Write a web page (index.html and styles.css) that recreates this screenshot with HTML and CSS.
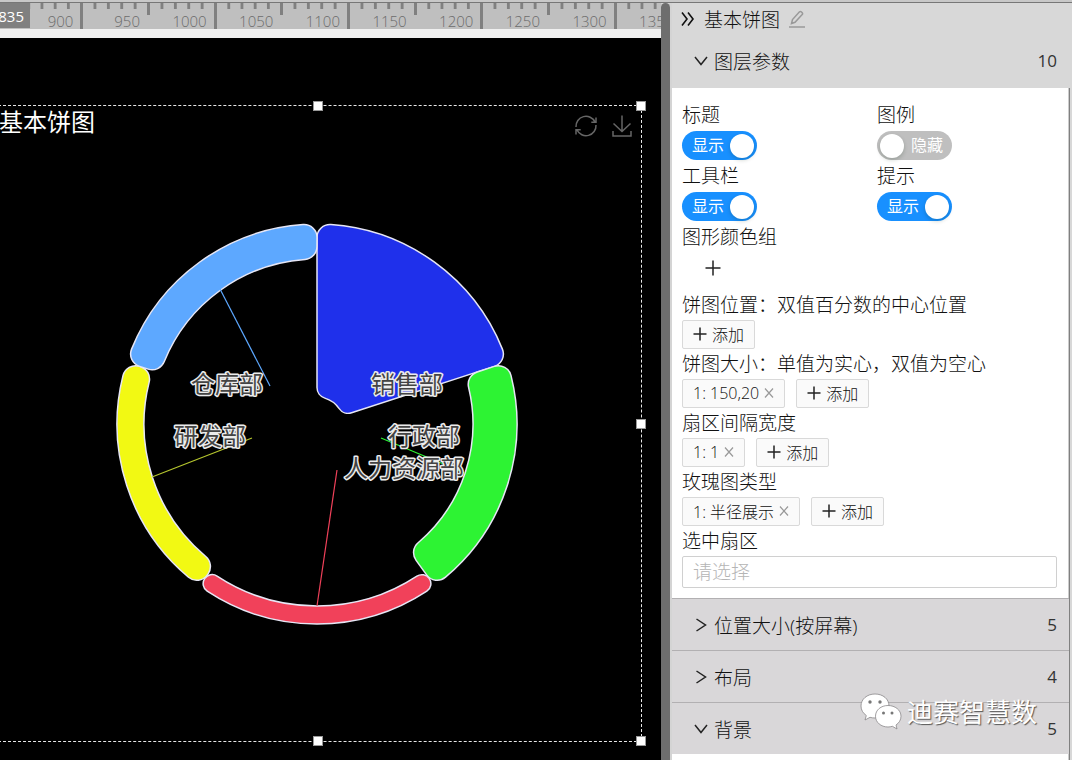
FILE: index.html
```html
<!DOCTYPE html>
<html lang="zh-CN">
<head>
<meta charset="utf-8">
<meta name="viewport" content="width=device-width, initial-scale=1">
<title>基本饼图</title>
<link rel="stylesheet" href="styles.css">
</head>
<body>
<div class="top-strip"></div>
<div class="workspace">
  <main class="editor">
    <div class="ruler">
      <div class="ruler-track">
        <span class="cell mid"></span><span class="cell major">900</span>
        <span class="cell mid">950</span><span class="cell major">1000</span>
        <span class="cell mid">1050</span><span class="cell major">1100</span>
        <span class="cell mid">1150</span><span class="cell major">1200</span>
        <span class="cell mid">1250</span><span class="cell major">1300</span>
        <span class="cell mid">1350</span><span class="cell major"></span>
      </div>
      <span class="ruler-badge">835</span>
    </div>
    <div class="canvas">
      <section class="frame">
        <header class="chart-head">
          <h1 class="chart-title">基本饼图</h1>
          <div class="chart-tools">
            <button class="icon-btn" type="button" aria-label="刷新">
              <svg width="24" height="24" viewBox="0 0 24 24" fill="none" stroke="currentColor" stroke-width="1.5"><path d="M2 13A10 10 0 0 1 21 8M22 11A10 10 0 0 1 3 16M22 3.500V8.300H17.300M2 20.500V15.700H6.700"/></svg>
            </button>
            <button class="icon-btn" type="button" aria-label="下载">
              <svg width="24" height="24" viewBox="0 0 24 24" fill="none" stroke="currentColor" stroke-width="1.500"><path d="M12 1.500V17M3.500 9.500L12 17.500L20.500 9.500M3 17V22H21V17"/></svg>
            </button>
          </div>
        </header>
        <svg class="chart" viewBox="-323 -318 647 635" role="img" aria-label="基本饼图">
          <g class="slices">
            <path fill="#1f30eb" d="M0-36.400V-186.500A13 13 0 0 1 13.900-199.500A200 200 0 0 1 185.400-74.900A13 13 0 0 1 177.400-57.600L34.600-11.200A11 11 0 0 1 22.200-15.400A27 27 0 0 0 7.800-25.900A11 11 0 0 1 0-36.400Z"/>
            <path fill="#2df333" transform="rotate(72)" d="M0-168.500V-186.500A13 13 0 0 1 13.900-199.500A200 200 0 0 1 185.400-74.900A13 13 0 0 1 177.400-57.600L160.300-52.100A13 13 0 0 1 144.200-59.500A156 156 0 0 0 12-155.500A13 13 0 0 1 0-168.500Z"/>
            <path fill="#f1415a" transform="rotate(144)" d="M0-190.800A9 9 0 0 1 9.400-199.800A200 200 0 0 1 187.100-70.700A9 9 0 0 1 181.500-59A9 9 0 0 1 170.200-64.300A182 182 0 0 0 8.600-181.800A9 9 0 0 1 0-190.800Z"/>
            <path fill="#f2f913" transform="rotate(216)" d="M0-185.500V-186.500A13 13 0 0 1 13.900-199.500A200 200 0 0 1 185.400-74.900A13 13 0 0 1 177.400-57.600L176.400-57.300A13 13 0 0 1 160.400-64.800A173 173 0 0 0 12.100-172.600A13 13 0 0 1 0-185.500Z"/>
            <path fill="#5da8ff" transform="rotate(288)" d="M0-177.500V-186.500A13 13 0 0 1 13.900-199.500A200 200 0 0 1 185.400-74.900A13 13 0 0 1 177.400-57.600L168.800-54.900A13 13 0 0 1 152.800-62.300A165 165 0 0 0 12-164.600A13 13 0 0 1 0-177.500Z"/>
          </g>
          <g class="leaders">
            <path stroke="#5da8ff" d="M-97-135L-47-38"/>
            <path stroke="#b5c62e" d="M-165 53L-65 14"/>
            <path stroke="#2df333" d="M64 14L148 49"/>
            <path stroke="#f1415a" d="M20 46L0 182"/>
          </g>
          <g class="slice-labels">
            <text x="54" y="-31">销售部</text>
            <text x="71" y="21">行政部</text>
            <text x="27" y="53">人力资源部</text>
            <text x="-143" y="21">研发部</text>
            <text x="-126" y="-31">仓库部</text>
          </g>
        </svg>
        <i class="handle n"></i><i class="handle ne"></i><i class="handle e"></i><i class="handle se"></i><i class="handle s"></i>
      </section>
    </div>
  </main>
  <div class="divider"><div class="divider-thumb"></div></div>
  <aside class="panel">
    <header class="panel-head">
      <button class="icon-btn" type="button" aria-label="收起">
        <svg width="15" height="16" viewBox="0 0 15 16" fill="none" stroke="currentColor" stroke-width="1.600"><path d="M1 1.500L6 8L1 14.500M7 1.500L12 8L7 14.500"/></svg>
      </button>
      <h2 class="panel-title">基本饼图</h2>
      <button class="icon-btn edit" type="button" aria-label="编辑">
        <svg width="18" height="18" viewBox="0 0 18 18" fill="none" stroke="currentColor" stroke-width="1.500"><path d="M1 17H17M3.500 13.500L4.500 9.500L11.500 1.800Q12.500 1 13.500 2L14.200 2.700Q15 3.700 14.200 4.600L7 12.300Z"/></svg>
      </button>
    </header>
    <button class="section-head first" type="button" aria-expanded="true">
      <svg class="chevron" width="14" height="14" viewBox="0 0 14 14"><path d="M1 3L7 10.500L13 3"/></svg>
      <span>图层参数</span><span class="count">10</span>
    </button>
    <div class="panel-body">
      <form class="form">
        <div class="switch-grid">
          <div class="field">
            <label class="label tall" for="sw-title">标题</label>
            <div class="switch"><input id="sw-title" type="checkbox" role="switch" checked><span>显示</span></div>
          </div>
          <div class="field">
            <label class="label tall" for="sw-legend">图例</label>
            <div class="switch off"><input id="sw-legend" type="checkbox" role="switch"><span>隐藏</span></div>
          </div>
          <div class="field">
            <label class="label tall" for="sw-tools">工具栏</label>
            <div class="switch"><input id="sw-tools" type="checkbox" role="switch" checked><span>显示</span></div>
          </div>
          <div class="field">
            <label class="label tall" for="sw-tip">提示</label>
            <div class="switch"><input id="sw-tip" type="checkbox" role="switch" checked><span>显示</span></div>
          </div>
        </div>
        <div class="label tall">图形颜色组</div>
        <button class="color-add" type="button" aria-label="添加颜色">
          <svg class="plus" width="16" height="16" viewBox="0 0 16 16"><path d="M8 0.500V15.500M0.500 8H15.500"/></svg>
        </button>
        <div class="label">饼图位置：双值百分数的中心位置</div>
        <div class="tags">
          <button class="tag add" type="button"><svg class="plus" width="14" height="14" viewBox="0 0 14 14"><path d="M7 0.500V13.500M0.500 7H13.500"/></svg>添加</button>
        </div>
        <div class="label">饼图大小：单值为实心，双值为空心</div>
        <div class="tags">
          <span class="tag">1: 150,20<button class="close" type="button" aria-label="删除"><svg width="10" height="10" viewBox="0 0 10 10"><path d="M1 0.500L9 9.500M9 0.500L1 9.500"/></svg></button></span>
          <button class="tag add" type="button"><svg class="plus" width="14" height="14" viewBox="0 0 14 14"><path d="M7 0.500V13.500M0.500 7H13.500"/></svg>添加</button>
        </div>
        <div class="label">扇区间隔宽度</div>
        <div class="tags">
          <span class="tag">1: 1<button class="close" type="button" aria-label="删除"><svg width="10" height="10" viewBox="0 0 10 10"><path d="M1 0.500L9 9.500M9 0.500L1 9.500"/></svg></button></span>
          <button class="tag add" type="button"><svg class="plus" width="14" height="14" viewBox="0 0 14 14"><path d="M7 0.500V13.500M0.500 7H13.500"/></svg>添加</button>
        </div>
        <div class="label">玫瑰图类型</div>
        <div class="tags">
          <span class="tag">1: 半径展示<button class="close" type="button" aria-label="删除"><svg width="10" height="10" viewBox="0 0 10 10"><path d="M1 0.500L9 9.500M9 0.500L1 9.500"/></svg></button></span>
          <button class="tag add" type="button"><svg class="plus" width="14" height="14" viewBox="0 0 14 14"><path d="M7 0.500V13.500M0.500 7H13.500"/></svg>添加</button>
        </div>
        <label class="label" for="picked">选中扇区</label>
        <input class="text-input" id="picked" type="text" placeholder="请选择">
      </form>
      <button class="section-head" type="button" aria-expanded="false">
        <svg class="chevron" width="14" height="14" viewBox="0 0 14 14"><path d="M2.500 1L11.500 7L2.500 13"/></svg>
        <span>位置大小(按屏幕)</span><span class="count">5</span>
      </button>
      <button class="section-head" type="button" aria-expanded="false">
        <svg class="chevron" width="14" height="14" viewBox="0 0 14 14"><path d="M2.500 1L11.500 7L2.500 13"/></svg>
        <span>布局</span><span class="count">4</span>
      </button>
      <button class="section-head" type="button" aria-expanded="true">
        <svg class="chevron" width="14" height="14" viewBox="0 0 14 14"><path d="M1 3L7 10.500L13 3"/></svg>
        <span>背景</span><span class="count">5</span>
      </button>
    </div>
    <div class="watermark">
      <svg width="42" height="38" viewBox="0 0 42 38">
        <path fill="#fff" stroke="#8a888a" stroke-width=".8" d="M15 1C7 1 1 6.200 1 13C1 17 3 20.200 6.300 22.500L5 27L10 24.300C11.600 24.800 13.300 25 15 25C23 25 29 20 29 13S23 1 15 1Z"/>
        <path fill="#fff" stroke="#8a888a" stroke-width=".8" d="M28 12.500C21 12.500 15.500 17 15.500 23.200S21 34 28 34C29.500 34 31 33.700 32.400 33.300L37 36L36 32C39 30 41 27 41 23.200C41 17 35 12.500 28 12.500Z"/>
        <g fill="#777"><circle cx="10" cy="9" r="1.700"/><circle cx="20" cy="9" r="1.700"/><circle cx="23.500" cy="20" r="1.500"/><circle cx="32" cy="20" r="1.500"/></g>
      </svg>
      <span>迪赛智慧数</span>
    </div>
  </aside>
</div>
</body>
</html>
```
FILE: styles.css
```css
* { box-sizing: border-box; }

body {
  margin: 0;
  height: 100vh;
  display: flex;
  flex-direction: column;
  overflow: hidden;
  font-family: "Open Sans", "Noto Sans CJK SC", sans-serif;
  font-weight: 300;
  font-size: 19px;
  color: #111;
  background: #d8d8d8;
}

button, input {
  font: inherit;
  color: inherit;
  margin: 0;
}

button {
  border: 0;
  padding: 0;
  background: none;
  cursor: pointer;
}

h1, h2 { margin: 0; font-weight: inherit; }

.top-strip {
  flex: none;
  height: 3px;
  background: #c8c8c8;
  border-bottom: 1px solid #777;
}

.workspace {
  flex: 1;
  min-height: 0;
  display: flex;
}

/* editor */
.editor {
  flex: 1;
  min-width: 0;
  display: flex;
  flex-direction: column;
  overflow: hidden;
}

.ruler {
  position: relative;
  flex: none;
  height: 35px;
  overflow: hidden;
  background: #bfbfbf;
  border-bottom: 9px solid #f0f0f0;
}

.ruler-track {
  display: grid;
  grid-template-columns: repeat(12, 1fr);
  width: 800px;
  height: 100%;
  margin-left: -50px;
}

.cell {
  padding: 6px 10px 0 0;
  text-align: right;
  font-size: 15px;
  line-height: 24px;
  color: #6c6c6c;
  background:
    linear-gradient(#808080, #808080) right top / 3px 12px no-repeat,
    linear-gradient(to left, #808080 3px, transparent 3px) left top / 20% 6px repeat-x;
}

.cell.major {
  background:
    linear-gradient(#808080, #808080) right top / 3px 100% no-repeat,
    linear-gradient(to left, #808080 3px, transparent 3px) left top / 20% 6px repeat-x;
}

.ruler-badge {
  position: absolute;
  left: 0;
  top: 0;
  width: 30px;
  height: 25px;
  padding-right: 6px;
  display: flex;
  justify-content: flex-end;
  font-size: 15px;
  font-weight: 400;
  line-height: 26px;
  color: #fff;
  background: #808080;
}

.canvas {
  position: relative;
  flex: 1;
  min-height: 0;
  overflow: hidden;
  background: #000;
}

.frame {
  position: absolute;
  top: 67px;
  right: 19px;
  bottom: 18px;
  width: 649px;
  display: grid;
  border: 1px dashed #e8e8e8;
}

.chart-head {
  grid-area: 1 / 1;
  align-self: start;
  display: flex;
  justify-content: space-between;
  padding: 0 7px 0 5px;
}

.chart-title {
  font-size: 24px;
  font-weight: 400;
  line-height: 32px;
  color: #fff;
}

.chart-tools {
  display: flex;
  gap: 12px;
  padding-top: 8px;
  color: #666;
}

.icon-btn, .close { display: flex; }

.chart {
  grid-area: 1 / 1;
  width: 100%;
  height: 100%;
  pointer-events: none;
}

.slices { stroke: #e6e6f5; stroke-width: 1.5; }
.leaders { fill: none; stroke-width: 1.2; }

.slice-labels {
  font-size: 24px;
  font-weight: 400;
  fill: #444;
  stroke: #ececec;
  stroke-width: 3;
  stroke-linejoin: round;
  paint-order: stroke;
}

.handle {
  position: absolute;
  width: 10px;
  height: 10px;
  background: #fff;
  border: 1px solid #999;
  transform: translate(-50%, -50%);
}

.n { left: 50%; top: 0; }
.ne { left: 100%; top: 0; }
.e { left: 100%; top: 50%; }
.se { left: 100%; top: 100%; }
.s { left: 50%; top: 100%; }

.divider {
  flex: none;
  width: 11px;
  padding-right: 2px;
  background: #d4d4d4;
}

.divider-thumb {
  height: 100%;
  background: #6e6e6e;
  border-radius: 5px 5px 0 0;
}

/* settings panel */
.panel {
  position: relative;
  flex: none;
  width: 400px;
  display: flex;
  flex-direction: column;
  background: #d8d8d8;
}

.panel-head {
  flex: none;
  display: flex;
  align-items: center;
  gap: 8px;
  height: 32px;
  padding-left: 9px;
}

.panel-title { font-size: 19px; }
.edit { color: #999; }

.section-head {
  display: flex;
  align-items: center;
  gap: 6px;
  width: 100%;
  height: 52px;
  padding: 0 12px 0 22px;
  border-top: 1px solid #b2b0b2;
  background: #d9d7d9;
  text-align: left;
}

.section-head.first {
  flex: none;
  height: 53px;
  padding: 0 15px 2px 22px;
  border-top: 0;
  background: #d8d8d8;
}

.count { margin-left: auto; font-size: 17px; font-weight: 400; color: #333; }

.chevron {
  fill: none;
  stroke: #222;
  stroke-width: 1.500;
}

.panel-body {
  flex: 1;
  min-height: 0;
  overflow: hidden;
  background: #fff;
  border-right: 1px solid #808080;
  margin-right: 2px;
  box-shadow: inset -1px 0 #ccc;
}

.form {
  display: flex;
  flex-direction: column;
  padding: 11px 12px 10px 10px;
}

.switch-grid {
  display: grid;
  grid-template-columns: 1fr 1fr;
  column-gap: 15px;
}

.field { display: flex; flex-direction: column; }

.label {
  display: block;
  line-height: 30px;
  white-space: nowrap;
}

.label.tall { line-height: 32px; }

.switch {
  position: relative;
  width: 75px;
  height: 29px;
}

.switch input {
  appearance: none;
  display: flex;
  justify-content: flex-end;
  align-items: center;
  width: 100%;
  height: 100%;
  padding: 0 3px;
  border-radius: 15px;
  background: #bfbfbf;
}

.switch input:checked { background: #1890ff; }
.switch.off input { justify-content: flex-start; }

.switch input::before {
  content: "";
  width: 24px;
  height: 24px;
  border-radius: 50%;
  background: #fff;
  box-shadow: 0 2px 4px rgba(0, 35, 11, .2);
}

.switch span {
  position: absolute;
  left: 10px;
  top: 0;
  font-size: 16px;
  font-weight: 400;
  line-height: 29px;
  color: #fff;
  pointer-events: none;
}

.switch.off span { left: auto; right: 9px; }

.color-add {
  display: flex;
  align-items: center;
  justify-content: center;
  width: 62px;
  height: 30px;
  margin-bottom: 7px;
}

.plus {
  fill: none;
  stroke: #222;
  stroke-width: 1.500;
}

.tags { display: flex; gap: 11px; }

.tag {
  display: flex;
  align-items: center;
  gap: 5px;
  height: 29px;
  padding: 0 10px 1px 10px;
  border: 1px solid #d9d9d9;
  border-radius: 2px;
  background: #fafafa;
  font-size: 16px;
  white-space: nowrap;
}

.close svg { fill: none; stroke: #999; stroke-width: 1.200; }

.text-input {
  width: 100%;
  height: 32px;
  padding: 0 10px;
  border: 1px solid #d0d0d0;
  border-radius: 2px;
  background: #fff;
}

.text-input::placeholder { color: #b5b5b5; opacity: 1; }

.watermark {
  position: absolute;
  right: 35px;
  bottom: 29px;
  display: flex;
  align-items: center;
  gap: 5px;
  font-size: 26px;
  font-weight: 400;
  line-height: 38px;
  color: #fff;
  text-shadow: 1px 1px 1px #555;
  pointer-events: none;
}
```
